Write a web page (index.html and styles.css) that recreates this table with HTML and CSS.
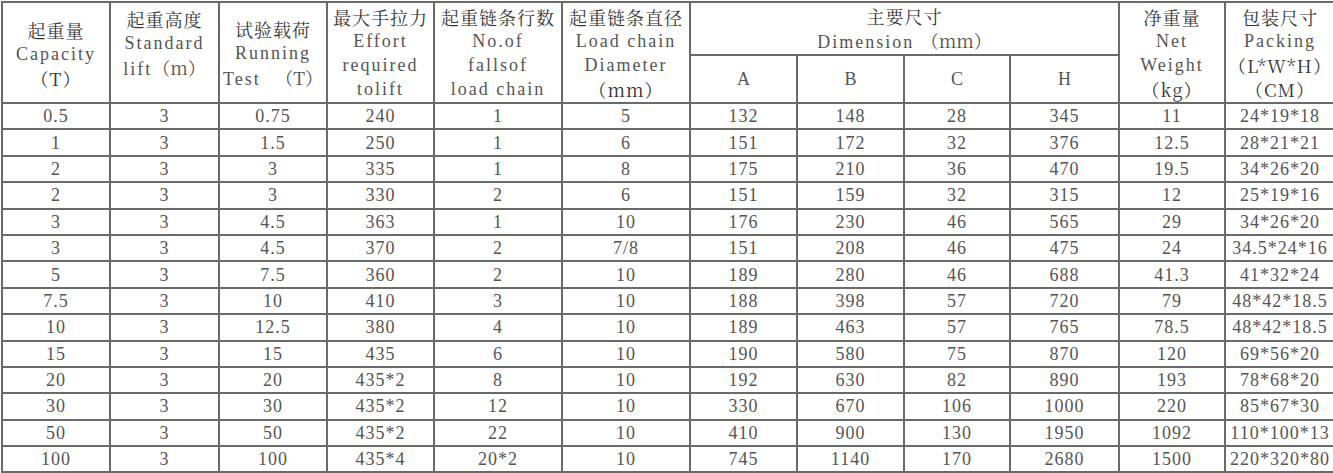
FILE: index.html
```html
<!DOCTYPE html>
<html>
<head>
<meta charset="utf-8">
<title>起重量参数表</title>
<link rel="stylesheet" href="styles.css">
</head>
<body>
<table class="spec">
  <colgroup>
    <col class="w108"><col class="w109"><col class="w108"><col class="w107">
    <col class="w128"><col class="w128"><col class="w107"><col class="w107">
    <col class="w106"><col class="w109"><col class="w106"><col class="w110">
  </colgroup>
  <thead>
    <tr class="h1">
      <th rowspan="2" class="low"><div class="zh">起重量</div><div class="en">Capacity</div><div class="zh">（T）</div></th>
      <th rowspan="2" class="top"><div class="zh">起重高度</div><div class="en">Standard</div><div class="en">lift<span class="zh">（m）</span></div></th>
      <th rowspan="2" class="low"><div class="zh">试验载荷</div><div class="en">Running</div><div class="en wide">Test <span class="zh">（T）</span></div></th>
      <th rowspan="2"><div class="zh">最大手拉力</div><div class="en">Effort</div><div class="en">required</div><div class="en">tolift</div></th>
      <th rowspan="2"><div class="zh">起重链条行数</div><div class="en">No.of</div><div class="en">fallsof</div><div class="en">load chain</div></th>
      <th rowspan="2"><div class="zh">起重链条直径</div><div class="en">Load chain</div><div class="en">Diameter</div><div class="zh">（mm）</div></th>
      <th colspan="4"><div class="zh">主要尺寸</div><div class="en">Dimension <span class="zh">（mm）</span></div></th>
      <th rowspan="2"><div class="zh">净重量</div><div class="en">Net</div><div class="en">Weight</div><div class="zh">（kg）</div></th>
      <th rowspan="2"><div class="zh">包装尺寸</div><div class="en">Packing</div><div class="zh">（L*W*H）</div><div class="zh">（CM）</div></th>
    </tr>
    <tr class="h2">
      <th class="sub">A</th><th class="sub">B</th><th class="sub">C</th><th class="sub">H</th>
    </tr>
  </thead>
  <tbody>
    <tr><td>0.5</td><td>3</td><td>0.75</td><td>240</td><td>1</td><td>5</td><td>132</td><td>148</td><td>28</td><td>345</td><td>11</td><td>24*19*18</td></tr>
    <tr><td>1</td><td>3</td><td>1.5</td><td>250</td><td>1</td><td>6</td><td>151</td><td>172</td><td>32</td><td>376</td><td>12.5</td><td>28*21*21</td></tr>
    <tr><td>2</td><td>3</td><td>3</td><td>335</td><td>1</td><td>8</td><td>175</td><td>210</td><td>36</td><td>470</td><td>19.5</td><td>34*26*20</td></tr>
    <tr><td>2</td><td>3</td><td>3</td><td>330</td><td>2</td><td>6</td><td>151</td><td>159</td><td>32</td><td>315</td><td>12</td><td>25*19*16</td></tr>
    <tr><td>3</td><td>3</td><td>4.5</td><td>363</td><td>1</td><td>10</td><td>176</td><td>230</td><td>46</td><td>565</td><td>29</td><td>34*26*20</td></tr>
    <tr><td>3</td><td>3</td><td>4.5</td><td>370</td><td>2</td><td>7/8</td><td>151</td><td>208</td><td>46</td><td>475</td><td>24</td><td>34.5*24*16</td></tr>
    <tr><td>5</td><td>3</td><td>7.5</td><td>360</td><td>2</td><td>10</td><td>189</td><td>280</td><td>46</td><td>688</td><td>41.3</td><td>41*32*24</td></tr>
    <tr><td>7.5</td><td>3</td><td>10</td><td>410</td><td>3</td><td>10</td><td>188</td><td>398</td><td>57</td><td>720</td><td>79</td><td>48*42*18.5</td></tr>
    <tr><td>10</td><td>3</td><td>12.5</td><td>380</td><td>4</td><td>10</td><td>189</td><td>463</td><td>57</td><td>765</td><td>78.5</td><td>48*42*18.5</td></tr>
    <tr><td>15</td><td>3</td><td>15</td><td>435</td><td>6</td><td>10</td><td>190</td><td>580</td><td>75</td><td>870</td><td>120</td><td>69*56*20</td></tr>
    <tr><td>20</td><td>3</td><td>20</td><td>435*2</td><td>8</td><td>10</td><td>192</td><td>630</td><td>82</td><td>890</td><td>193</td><td>78*68*20</td></tr>
    <tr><td>30</td><td>3</td><td>30</td><td>435*2</td><td>12</td><td>10</td><td>330</td><td>670</td><td>106</td><td>1000</td><td>220</td><td>85*67*30</td></tr>
    <tr><td>50</td><td>3</td><td>50</td><td>435*2</td><td>22</td><td>10</td><td>410</td><td>900</td><td>130</td><td>1950</td><td>1092</td><td>110*100*13</td></tr>
    <tr><td>100</td><td>3</td><td>100</td><td>435*4</td><td>20*2</td><td>10</td><td>745</td><td>1140</td><td>170</td><td>2680</td><td>1500</td><td>220*320*80</td></tr>
  </tbody>
</table>
</body>
</html>
```

FILE: styles.css
```css
html, body {
  margin: 0;
  padding: 0;
  background: #ffffff;
}

body {
  padding-top: 1px;
  padding-left: 1px;
}

.spec {
  border-collapse: collapse;
  table-layout: fixed;
  width: 1332px;
  font-family: "Liberation Serif", "Noto Serif CJK SC", serif;
  color: #555555;
}

.w106 { width: 106px; }
.w107 { width: 107px; }
.w108 { width: 108px; }
.w109 { width: 109px; }
.w110 { width: 110px; }
.w128 { width: 128px; }

.spec th,
.spec td {
  border: 2px solid #6a6a6a;
  padding: 0;
  text-align: center;
  vertical-align: middle;
  font-weight: normal;
  white-space: nowrap;
  overflow: visible;
}

.h1 { height: 53px; }
.h2 { height: 48px; }

.spec th {
  line-height: 24px;
}

.spec th.low {
  padding-top: 2px;
}

.spec th.top {
  vertical-align: top;
  padding-top: 4px;
}

.zh {
  font-family: "Noto Serif CJK SC", "Liberation Serif", serif;
  font-size: 18px;
  letter-spacing: 1px;
  color: #363636;
}

.en {
  font-family: "Liberation Serif", "Noto Serif CJK SC", serif;
  font-size: 18px;
  letter-spacing: 2px;
}

.en.wide {
  word-spacing: 8px;
}

.en .zh {
  letter-spacing: 0;
  color: #555555;
}

.spec th.sub {
  font-family: "Liberation Serif", serif;
  font-size: 18px;
}

.spec tbody tr {
  height: 26.4px;
}

.spec td {
  font-family: "Liberation Serif", serif;
  font-size: 18px;
  line-height: 20px;
  letter-spacing: 1px;
}
```
